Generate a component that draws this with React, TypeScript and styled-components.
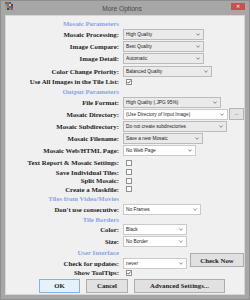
import React from 'react';
import styled, { createGlobalStyle } from 'styled-components';

const LABEL_FONT = '"Liberation Serif", "DejaVu Serif", serif';
const UI_FONT = '"Liberation Sans", Arial, sans-serif';
const HEADING_COLOR = '#87a3ea';

const GlobalStyle = createGlobalStyle`
  html, body {
    margin: 0;
    padding: 0;
    background: #a7a7a7;
  }
`;

const Window = styled.div`
  width: 250px;
  height: 300px;
  box-sizing: border-box;
  background: #a7a7a7;
  border: 1px solid #8e8e8e;
  padding: 0 4px 4px 4px;
  display: flex;
  flex-direction: column;
`;

const TitleBar = styled.div`
  height: 14px;
  display: flex;
  align-items: center;
`;

const TitleText = styled.div`
  flex: 1;
  text-align: center;
  font-family: ${UI_FONT};
  font-size: 6.6px;
  color: #4a4a4a;
`;

const CloseButton = styled.div`
  width: 14px;
  height: 7px;
  margin-top: -4px;
  background: #c75050;
  color: #fff;
  font-family: ${UI_FONT};
  font-size: 5px;
  line-height: 7px;
  text-align: center;
`;

const Body = styled.div`
  flex: 1;
  background: #f0f0f0;
  border: 1px solid #d6d6d6;
  padding-top: 2px;
  display: flex;
  flex-direction: column;
`;

const Row = styled.div<{ $h: number }>`
  height: ${(p) => p.$h}px;
  display: grid;
  grid-template-columns: 113px 1fr;
  column-gap: 4px;
  align-items: center;
`;

const Label = styled.div`
  text-align: right;
  font-family: ${LABEL_FONT};
  font-weight: bold;
  font-size: 6.8px;
  color: #1c1c1c;
  white-space: nowrap;
`;

const Heading = styled(Label)`
  color: ${HEADING_COLOR};
`;

const Control = styled.div`
  display: flex;
  align-items: center;
`;

const Select = styled.div<{ $w: number; $white?: boolean }>`
  width: ${(p) => p.$w}px;
  height: 11px;
  box-sizing: border-box;
  border: 1px solid ${(p) => (p.$white ? '#cacaca' : '#bbbbbb')};
  background: ${(p) => (p.$white ? '#ffffff' : '#eaeaea')};
  display: flex;
  align-items: center;
  padding: 0 3px 0 2px;
  font-family: ${UI_FONT};
  font-size: 4.8px;
  color: #222;
`;

const SelectText = styled.span`
  flex: 1;
  white-space: nowrap;
  overflow: hidden;
`;

const Arrow = styled.svg`
  width: 4px;
  height: 3px;
`;

const Check = styled.div`
  width: 6px;
  height: 6px;
  margin-left: 3px;
  box-sizing: border-box;
  border: 1px solid #8f8f8f;
  background: #fff;
  display: flex;
  align-items: center;
  justify-content: center;
`;

const SmallButton = styled.div`
  width: 15px;
  height: 12px;
  margin-left: 1px;
  box-sizing: border-box;
  border: 1px solid #b4b4b4;
  background: #e3e3e3;
  font-family: ${UI_FONT};
  font-size: 5px;
  line-height: 8px;
  text-align: center;
  color: #333;
`;

const PushButton = styled.div<{ $w: number; $primary?: boolean }>`
  width: ${(p) => p.$w}px;
  height: 14px;
  box-sizing: border-box;
  border: 1px solid ${(p) => (p.$primary ? '#7eb4ea' : '#adadad')};
  background: ${(p) => (p.$primary ? '#e5f1fb' : '#e1e1e1')};
  display: flex;
  align-items: center;
  justify-content: center;
  font-family: ${LABEL_FONT};
  font-weight: bold;
  font-size: 6.8px;
  color: #1c1c1c;
`;

const CheckNow = styled(PushButton)`
  margin-left: 3px;
  margin-top: -7px;
`;

const ButtonRow = styled.div`
  display: flex;
  gap: 6px;
  padding-left: 33px;
  margin-top: 1px;
`;

const Icon = () => (
  <svg width="8" height="8" viewBox="0 0 4 4" style={{ marginTop: -4 }}>
    {[
      ['#d23c3c', '#3c9b3c', '#3c5ad2', '#d2a03c'],
      ['#3cb4c8', '#c83cb4', '#e6d23c', '#3c3cb4'],
      ['#5ac85a', '#d2643c', '#3c78d2', '#b43c3c'],
      ['#c8a03c', '#3c3c8c', '#3cb45a', '#d23c78'],
    ].map((r, y) =>
      r.map((c, x) => <rect key={`${x}-${y}`} x={x} y={y} width="1" height="1" fill={c} />),
    )}
  </svg>
);

const Chevron = () => (
  <Arrow viewBox="0 0 4 3">
    <path d="M0.3 0.5 L2 2.3 L3.7 0.5" fill="none" stroke="#6a6a6a" strokeWidth="0.8" />
  </Arrow>
);

const Drop = ({ w, text, white }: { w: number; text: string; white?: boolean }) => (
  <Select $w={w} $white={white}>
    <SelectText>{text}</SelectText>
    <Chevron />
  </Select>
);

const Box = ({ checked }: { checked?: boolean }) => (
  <Check>
    {checked && (
      <svg width="4" height="4" viewBox="0 0 4 4">
        <path d="M0.4 2 L1.5 3.2 L3.6 0.6" fill="none" stroke="#333" strokeWidth="0.8" />
      </svg>
    )}
  </Check>
);

const SelectRow = ({ h, label, w, text, white }: { h: number; label: string; w: number; text: string; white?: boolean }) => (
  <Row $h={h}>
    <Label>{label}</Label>
    <Control>
      <Drop w={w} text={text} white={white} />
    </Control>
  </Row>
);

const CheckRow = ({ h, label, checked }: { h: number; label: string; checked?: boolean }) => (
  <Row $h={h}>
    <Label>{label}</Label>
    <Control>
      <Box checked={checked} />
    </Control>
  </Row>
);

const HeadingRow = ({ h, text }: { h: number; text: string }) => (
  <Row $h={h}>
    <Heading>{text}</Heading>
  </Row>
);

export default function App() {
  return (
    <>
      <GlobalStyle />
      <Window>
        <TitleBar>
          <Icon />
          <TitleText>More Options</TitleText>
          <CloseButton>✕</CloseButton>
        </TitleBar>
        <Body>
          <HeadingRow h={10} text="Mosaic Parameters" />
          <SelectRow h={12} label="Mosaic Processing:" w={81} text="High Quality" />
          <SelectRow h={12.5} label="Image Compare:" w={81} text="Best Quality" />
          <SelectRow h={12.5} label="Image Detail:" w={81} text="Automatic" />
          <SelectRow h={12} label="Color Change Priority:" w={89} text="Balanced Quality" />
          <CheckRow h={9} label="Use All Images in the Tile List:" checked />
          <HeadingRow h={11} text="Output Parameters" />
          <SelectRow h={11} label="File Format:" w={98} text="High Quality (.JPG  95%)" />
          <Row $h={12}>
            <Label>Mosaic Directory:</Label>
            <Control>
              <Drop w={105} text="(Use Directory of Input Image)" white />
              <SmallButton>...</SmallButton>
            </Control>
          </Row>
          <SelectRow h={12.5} label="Mosaic Subdirectory:" w={104} text="Do not create subdirectories" />
          <SelectRow h={12} label="Mosaic Filename:" w={80} text="Save a new Mosaic" />
          <SelectRow h={12.5} label="Mosaic Web/HTML Page:" w={73} text="No Web Page" white />
          <CheckRow h={11} label="Text Report & Mosaic Settings:" />
          <CheckRow h={8.5} label="Save Individual Tiles:" />
          <CheckRow h={8.5} label="Split Mosaic:" />
          <CheckRow h={8.5} label="Create a Maskfile:" />
          <HeadingRow h={10} text="Tiles from Video/Movies" />
          <SelectRow h={11.5} label="Don't use consecutive:" w={78} text="No Frames" white />
          <HeadingRow h={9} text="Tile Borders" />
          <SelectRow h={11} label="Color:" w={64} text="Black" white />
          <SelectRow h={12} label="Size:" w={64} text="No Border" white />
          <HeadingRow h={11} text="User Interface" />
          <Row $h={10}>
            <Label>Check for updates:</Label>
            <Control>
              <Drop w={64} text="never" white />
              <CheckNow $w={54}>Check Now</CheckNow>
            </Control>
          </Row>
          <CheckRow h={9.5} label="Show ToolTips:" checked />
          <ButtonRow>
            <PushButton $w={41} $primary>OK</PushButton>
            <PushButton $w={42}>Cancel</PushButton>
            <PushButton $w={91}>Advanced Settings...</PushButton>
          </ButtonRow>
        </Body>
      </Window>
    </>
  );
}
